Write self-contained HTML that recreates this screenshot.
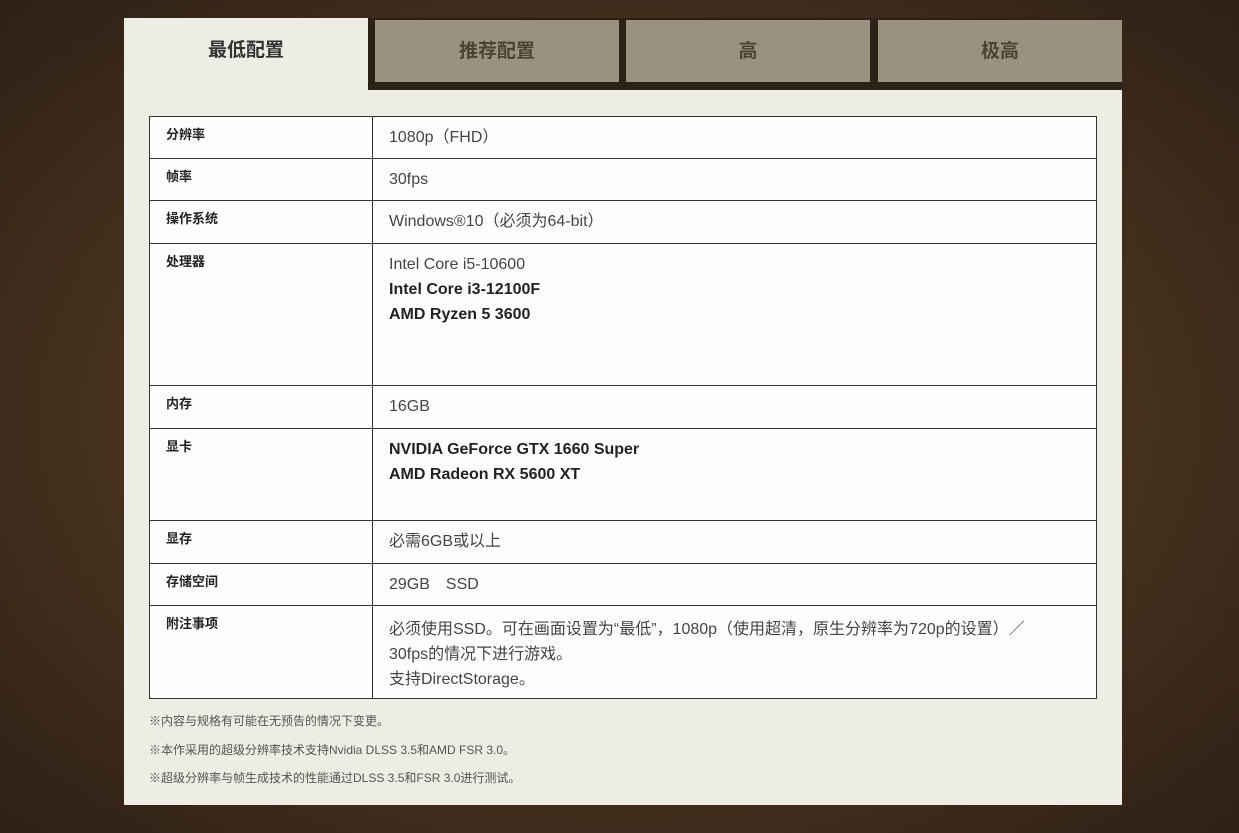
<!DOCTYPE html>
<html><head><meta charset="utf-8"><style>
*{margin:0;padding:0;box-sizing:border-box}
body{width:1239px;height:833px;overflow:hidden;background:radial-gradient(ellipse at 50% 50%,#5a4128 0%,#47321f 55%,#2e2015 100%);font-family:"Liberation Sans","Noto Sans CJK SC",sans-serif;position:relative}
.panel{position:absolute;left:124px;top:18px;width:998px;height:787px;background:#edece5}
.tabbar{position:absolute;left:244px;top:0;width:754px;height:72px;background:#2b2116}
.tab{position:absolute;top:2px;height:62px;padding-bottom:4px;background:#9a927f;color:#4a4434;font-size:19px;font-weight:bold;display:flex;align-items:center;justify-content:center}
.tab0{position:absolute;left:0;top:0;width:244px;height:64px;padding-bottom:4px;display:flex;align-items:center;justify-content:center;font-size:19px;font-weight:bold;color:#333}
table{position:absolute;left:25px;top:98px;width:948px;border-collapse:collapse;background:#fefefd}
td{border:1px solid #333;vertical-align:top;font-size:16px;color:#444;line-height:25px}
td.h{width:223px;font-size:13px;font-weight:bold;color:#222;padding:5px 16px 0}
td.v{padding:8px 16px 0}
b{color:#222}
.note{position:absolute;left:25px;font-size:12px;color:#555}
</style></head><body>
<div class="panel">
<div class="tab0">最低配置</div>
<div class="tabbar">
<div class="tab" style="left:7px;width:244px">推荐配置</div>
<div class="tab" style="left:258px;width:244px">高</div>
<div class="tab" style="left:510px;width:244px">极高</div>
</div>
<table>
<tr style="height:42px"><td class="h">分辨率</td><td class="v">1080p（FHD）</td></tr>
<tr style="height:42px"><td class="h">帧率</td><td class="v">30fps</td></tr>
<tr style="height:43px"><td class="h">操作系统</td><td class="v">Windows®10（必须为64-bit）</td></tr>
<tr style="height:142px"><td class="h">处理器</td><td class="v">Intel Core i5-10600<br><b>Intel Core i3-12100F<br>AMD Ryzen 5 3600</b></td></tr>
<tr style="height:43px"><td class="h">内存</td><td class="v">16GB</td></tr>
<tr style="height:92px"><td class="h">显卡</td><td class="v"><b>NVIDIA GeForce GTX 1660 Super<br>AMD Radeon RX 5600 XT</b></td></tr>
<tr style="height:43px"><td class="h">显存</td><td class="v">必需6GB或以上</td></tr>
<tr style="height:42px"><td class="h">存储空间</td><td class="v">29GB　SSD</td></tr>
<tr style="height:93px"><td class="h">附注事项</td><td class="v" style="padding-top:11px">必须使用SSD。可在画面设置为“最低”，1080p（使用超清，原生分辨率为720p的设置）／<br>30fps的情况下进行游戏。<br>支持DirectStorage。</td></tr>
</table>
<div class="note" style="top:694px">※内容与规格有可能在无预告的情况下变更。</div>
<div class="note" style="top:723px">※本作采用的超级分辨率技术支持Nvidia DLSS 3.5和AMD FSR 3.0。</div>
<div class="note" style="top:751px">※超级分辨率与帧生成技术的性能通过DLSS 3.5和FSR 3.0进行测试。</div>
</div>
</body></html>
